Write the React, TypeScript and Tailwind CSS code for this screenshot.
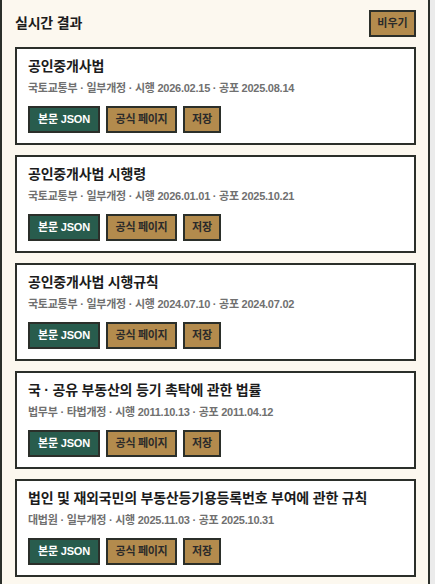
import React from "react";

type Law = {
  title: string;
  ministry: string;
  kind: string;
  effective: string;
  promulgated: string;
};

const laws: Law[] = [
  { title: "공인중개사법", ministry: "국토교통부", kind: "일부개정", effective: "2026.02.15", promulgated: "2025.08.14" },
  { title: "공인중개사법 시행령", ministry: "국토교통부", kind: "일부개정", effective: "2026.01.01", promulgated: "2025.10.21" },
  { title: "공인중개사법 시행규칙", ministry: "국토교통부", kind: "일부개정", effective: "2024.07.10", promulgated: "2024.07.02" },
  { title: "국 · 공유 부동산의 등기 촉탁에 관한 법률", ministry: "법무부", kind: "타법개정", effective: "2011.10.13", promulgated: "2011.04.12" },
  { title: "법인 및 재외국민의 부동산등기용등록번호 부여에 관한 규칙", ministry: "대법원", kind: "일부개정", effective: "2025.11.03", promulgated: "2025.10.31" },
];

function ResultCard({ law }: { law: Law }) {
  return (
    <div className="border-2 border-[#2b2f2a] bg-white px-[11px] pt-[9px] pb-[10px]">
      <p className="text-[14px] leading-[16px] font-semibold tracking-[-0.2px] text-[#1c1c1c]">{law.title}</p>
      <p className="mt-[7px] text-[11px] leading-[14px] font-semibold tracking-[-0.25px] text-[#707070]">
        {law.ministry} · {law.kind} · 시행 {law.effective} · 공포 {law.promulgated}
      </p>
      <div className="mt-[11px] flex gap-[6px]">
        <button className="flex h-[27px] w-[72px] items-center justify-center border-2 border-[#2b2f2a] bg-[#285c4d] text-[11px] font-bold tracking-[-0.2px] text-white">
          본문 JSON
        </button>
        <button className="flex h-[27px] w-[71px] items-center justify-center border-2 border-[#2b2f2a] bg-[#b38b4d] text-[11px] font-bold tracking-[-0.3px] text-[#2a2a2a]">
          공식 페이지
        </button>
        <button className="flex h-[27px] w-[38px] items-center justify-center border-2 border-[#2b2f2a] bg-[#b38b4d] text-[11px] font-bold text-[#2a2a2a]">
          저장
        </button>
      </div>
    </div>
  );
}

export default function App() {
  return (
    <div
      className="min-h-[584px] bg-[#ebebeb]"
      style={{ fontFamily: '"Liberation Sans", "Noto Sans CJK KR", sans-serif' }}
    >
      <div className="w-[430px] border-x-2 border-[#2b2f2a] bg-[#fcf8ef] pl-[13px] pr-[12px] pt-[10px] pb-[14px]">
        <div className="flex items-center justify-between">
          <h2 className="text-[14px] font-semibold tracking-[-0.2px] text-[#1c1c1c]">실시간 결과</h2>
          <button className="h-[27px] w-[47px] border-2 border-[#2b2f2a] bg-[#b38b4d] text-[11px] font-bold text-[#2a2a2a]">
            비우기
          </button>
        </div>
        <div className="mt-[10px] flex flex-col gap-[10px]">
          {laws.map((law) => (
            <ResultCard key={law.title} law={law} />
          ))}
        </div>
      </div>
    </div>
  );
}
